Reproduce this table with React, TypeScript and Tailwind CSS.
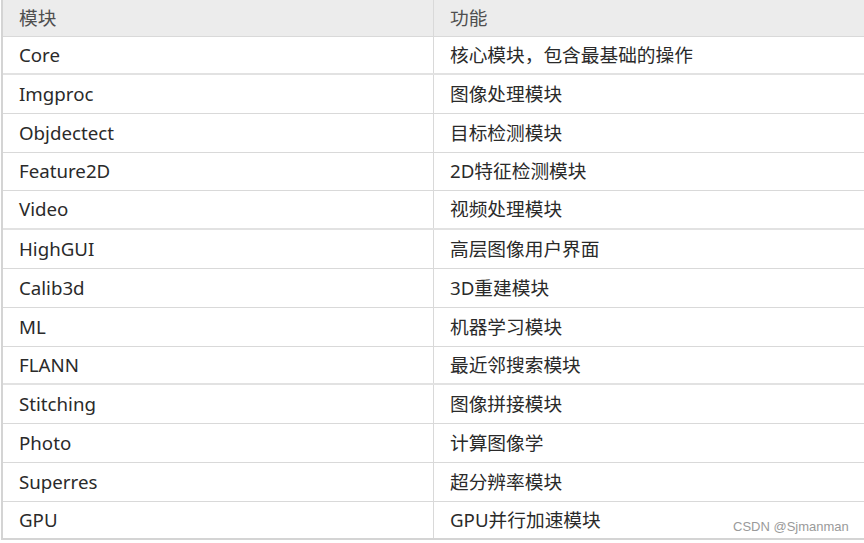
import React from "react";

const rows: { a: string; b: string; h: string; border: string }[] = [
  { a: "Core", b: "核心模块，包含最基础的操作", h: "h-[38px]", border: "border-b-2 border-[#e2e2e2]" },
  { a: "Imgproc", b: "图像处理模块", h: "h-[39px]", border: "border-b border-[#d9d9d9]" },
  { a: "Objdectect", b: "目标检测模块", h: "h-[39px]", border: "border-b border-[#d9d9d9]" },
  { a: "Feature2D", b: "2D特征检测模块", h: "h-[38px]", border: "border-b border-[#d9d9d9]" },
  { a: "Video", b: "视频处理模块", h: "h-[39px]", border: "border-b-2 border-[#e2e2e2]" },
  { a: "HighGUI", b: "高层图像用户界面", h: "h-[39px]", border: "border-b border-[#d9d9d9]" },
  { a: "Calib3d", b: "3D重建模块", h: "h-[39px]", border: "border-b border-[#d9d9d9]" },
  { a: "ML", b: "机器学习模块", h: "h-[39px]", border: "border-b border-[#d9d9d9]" },
  { a: "FLANN", b: "最近邻搜索模块", h: "h-[38px]", border: "border-b-2 border-[#e2e2e2]" },
  { a: "Stitching", b: "图像拼接模块", h: "h-[39px]", border: "border-b border-[#d9d9d9]" },
  { a: "Photo", b: "计算图像学", h: "h-[39px]", border: "border-b border-[#d9d9d9]" },
  { a: "Superres", b: "超分辨率模块", h: "h-[39px]", border: "border-b border-[#d9d9d9]" },
  { a: "GPU", b: "GPU并行加速模块", h: "h-[38px]", border: "border-b-2 border-[#d4d4d4]" },
];

export default function App() {
  return (
    <div
      className="relative w-[864px] h-[543px] overflow-hidden bg-white"
      style={{ fontFamily: '"Noto Sans", "Noto Sans CJK SC", sans-serif' }}
    >
      <div className="ml-[1px] w-[900px] border-l-2 border-[#d4d4d4] text-[18.7px] text-[#2a2a2a]">
        <div className="flex h-[37px] bg-[#ececec] border-b border-[#d9d9d9] text-[#4f4f4f]">
          <div className="w-[431px] border-r border-[#d9d9d9] flex items-center pl-[16px]">模块</div>
          <div className="flex-1 flex items-center pl-[16px]">功能</div>
        </div>
        {rows.map((r) => (
          <div key={r.a} className={`flex ${r.h} ${r.border}`}>
            <div className="w-[431px] border-r border-[#d9d9d9] flex items-center pl-[16px]">{r.a}</div>
            <div className="flex-1 flex items-center pl-[16px]">{r.b}</div>
          </div>
        ))}
      </div>
      <div
        className="absolute left-[733px] top-[517px] text-[13px] text-[#9a9a9a]"
        style={{ fontFamily: '"Liberation Sans", Arial, sans-serif' }}
      >
        CSDN @Sjmanman
      </div>
    </div>
  );
}
